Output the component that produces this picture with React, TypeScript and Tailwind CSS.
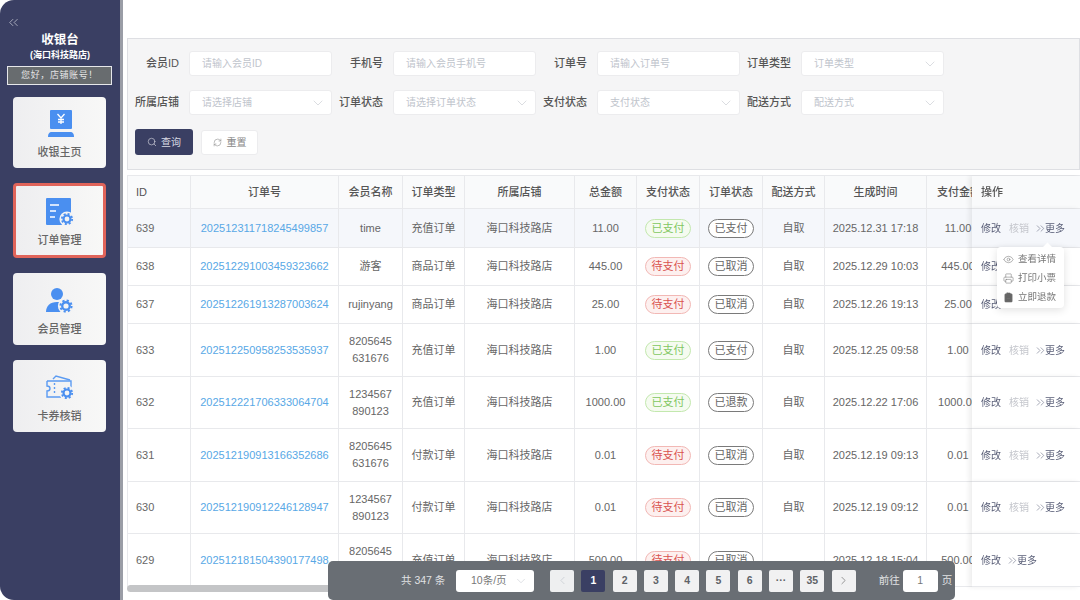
import { ChevronDown, ChevronLeft, ChevronRight, ChevronsLeft, ChevronsRight, ClipboardMinus, Eye, Printer, RefreshCw, Search } from "lucide-react";

type Tone = "paid" | "unpaid" | "plain";

interface OrderRow {
  id: string;
  no: string;
  member: string;
  type: string;
  amount: string;
  pay: string;
  payTone: Tone;
  status: string;
  delivery: string;
  time: string;
  height: string;
  noVerify?: boolean;
  underMenu?: boolean;
}

const rows: OrderRow[] = [
  { id: "639", no: "202512311718245499857", member: "time", type: "充值订单", amount: "11.00", pay: "已支付", payTone: "paid", status: "已支付", delivery: "自取", time: "2025.12.31 17:18", height: "h-[39px] bg-[#f5f7fb]" },
  { id: "638", no: "202512291003459323662", member: "游客", type: "商品订单", amount: "445.00", pay: "待支付", payTone: "unpaid", status: "已取消", delivery: "自取", time: "2025.12.29 10:03", height: "h-[38px] bg-white", underMenu: true },
  { id: "637", no: "202512261913287003624", member: "rujinyang", type: "商品订单", amount: "25.00", pay: "待支付", payTone: "unpaid", status: "已取消", delivery: "自取", time: "2025.12.26 19:13", height: "h-[38px] bg-white", underMenu: true },
  { id: "633", no: "202512250958253535937", member: "8205645631676", type: "充值订单", amount: "1.00", pay: "已支付", payTone: "paid", status: "已支付", delivery: "自取", time: "2025.12.25 09:58", height: "h-[53px] bg-white" },
  { id: "632", no: "202512221706333064704", member: "1234567890123", type: "充值订单", amount: "1000.00", pay: "已支付", payTone: "paid", status: "已退款", delivery: "自取", time: "2025.12.22 17:06", height: "h-[52px] bg-white" },
  { id: "631", no: "202512190913166352686", member: "8205645631676", type: "付款订单", amount: "0.01", pay: "待支付", payTone: "unpaid", status: "已取消", delivery: "自取", time: "2025.12.19 09:13", height: "h-[53px] bg-white" },
  { id: "630", no: "202512190912246128947", member: "1234567890123", type: "付款订单", amount: "0.01", pay: "待支付", payTone: "unpaid", status: "已取消", delivery: "自取", time: "2025.12.19 09:12", height: "h-[52px] bg-white" },
  { id: "629", no: "202512181504390177498", member: "8205645631676", type: "充值订单", amount: "500.00", pay: "待支付", payTone: "unpaid", status: "已取消", delivery: "-", time: "2025.12.18 15:04", height: "h-[53px] bg-white", noVerify: true },
];

const toneClass: Record<Tone, string> = {
  paid: "border-[#c3e8ae] bg-[#f5fbf0] text-[#82c761]",
  unpaid: "border-[#f2b8b5] bg-[#fdf0ef] text-[#d9534f]",
  plain: "border-[#7a7a7a] bg-white text-[#666666]",
};

const Tag = ({ label, tone }: { label: string; tone: Tone }) => (
  <span className={`inline-flex h-[19px] w-[46px] items-center justify-center rounded-full border align-middle text-[11px] ${toneClass[tone]}`}>
    {label}
  </span>
);

const Gear = ({ x, y, r = 6 }: { x: number; y: number; r?: number }) => (
  <g>
    <circle cx={x} cy={y} r={r + 1.6} fill="#f3f3f4" />
    <circle cx={x} cy={y} r={r * 0.86} fill="none" stroke="#4a8ff0" strokeWidth={r * 0.3} strokeDasharray={`${r * 0.34} ${r * 0.335}`} />
    <circle cx={x} cy={y} r={r * 0.58} fill="none" stroke="#4a8ff0" strokeWidth={r * 0.36} />
  </g>
);

const CashierIcon = () => (
  <svg width="28" height="30" viewBox="0 0 28 30">
    <rect x="4" y="1" width="22" height="19" rx="1" fill="#4a8ff0" />
    <path d="M11.5 5l3.5 4 3.500-4M15 9v6M12 10.500h6M12 13h6" fill="none" stroke="#fff" strokeWidth="1.300" />
    <path d="M2 28c0-3 1-5 4-5h18c3 0 4 2 4 5z" fill="#4a8ff0" />
    <rect x="9" y="20" width="12" height="3" fill="#f3f3f4" />
  </svg>
);

const OrderIcon = () => (
  <svg width="30" height="30" viewBox="0 0 30 30">
    <rect x="1" y="1" width="25" height="27" rx="1" fill="#4a8ff0" />
    <path d="M5 8h9M5 14h6M5 20h5" stroke="#fff" strokeWidth="1.400" />
    <Gear x={22} y={22} r={6} />
  </svg>
);

const MemberIcon = () => (
  <svg width="30" height="28" viewBox="0 0 30 28">
    <circle cx="12" cy="7" r="6" fill="#4a8ff0" />
    <path d="M1 25c0-6 4-10 11-10 3 0 5 .6 6.500 2v8z" fill="#4a8ff0" />
    <Gear x={21} y={19} r={6.500} />
  </svg>
);

const TicketIcon = () => (
  <svg width="30" height="28" viewBox="0 0 30 28">
    <path d="M8 5l3-3 14 4" fill="none" stroke="#5b9bf2" strokeWidth="1.400" />
    <path d="M2 7h24v8M2 7v5c2 0 3 1 3 2.500S4 17 2 17v6h14" fill="none" stroke="#5b9bf2" strokeWidth="1.400" />
    <path d="M9.500 9v12" stroke="#5b9bf2" strokeWidth="1.400" strokeDasharray="2 2" />
    <Gear x={22} y={19} r={6} />
  </svg>
);

const navItems = [
  { label: "收银主页", icon: <CashierIcon />, box: "h-[71px] mb-[15px] border-0 pt-[12px]" },
  { label: "订单管理", icon: <OrderIcon />, box: "h-[75px] mb-[15px] border-[3px] border-[#e0645a] pt-[11px]" },
  { label: "会员管理", icon: <MemberIcon />, box: "h-[72px] mb-[15px] border-0 pt-[13px]" },
  { label: "卡券核销", icon: <TicketIcon />, box: "h-[72px] border-0 pt-[13px]" },
];

const Sidebar = () => (
  <aside className="flex h-[600px] w-[123px] shrink-0 flex-col rounded-l-[14px] border-r-[3px] border-[#9a9da6] bg-[#3a3f63] pt-[15px]">
    <ChevronsLeft className="ml-[6px] h-[15px] w-[15px] text-[#d5d6df]" strokeWidth={1.100} />
    <div className="mt-[2px] text-center text-[12.500px] leading-[16px] font-bold text-white">收银台</div>
    <div className="text-center text-[9px] leading-[14px] font-bold text-white">(海口科技路店)</div>
    <div className="mx-[7px] mt-[4px] flex h-[19px] w-[105px] items-center justify-center border-[1.500px] border-[#e6e7ea] bg-[#686c6f] text-[9px] tracking-[0.6px] text-[#e4e4e4]">
      您好，店铺账号！
    </div>
    <div className="mt-[12px] flex flex-col px-[13px]">
      {navItems.map((item) => (
        <div key={item.label} className={`flex w-[93px] flex-col items-center rounded-[4px] bg-gradient-to-r from-[#eeeef0] to-[#f8f8f7] ${item.box}`}>
          <div className="flex h-[30px] items-center">{item.icon}</div>
          <span className="mt-[5px] text-[11px] leading-[16px] font-medium text-[#666666]">{item.label}</span>
        </div>
      ))}
    </div>
  </aside>
);

const filters = [
  { label: "会员ID", hint: "请输入会员ID" },
  { label: "手机号", hint: "请输入会员手机号" },
  { label: "订单号", hint: "请输入订单号" },
  { label: "订单类型", hint: "订单类型", select: true },
  { label: "所属店铺", hint: "请选择店铺", select: true },
  { label: "订单状态", hint: "请选择订单状态", select: true },
  { label: "支付状态", hint: "支付状态", select: true },
  { label: "配送方式", hint: "配送方式", select: true },
];

const FilterPanel = () => (
  <section className="h-[132px] border border-[#dedfe3] bg-[#f5f5f6] pt-[12px] pl-[7px]">
    <div className="grid grid-cols-[197px_197px_197px_197px] gap-x-[7px] gap-y-[14px]">
      {filters.map((f) => (
        <div key={f.label} className="flex items-center">
          <span className="w-[44px] whitespace-nowrap text-right text-[11px] font-medium text-[#555555]">{f.label}</span>
          <div className="ml-[10px] flex h-[25px] w-[143px] items-center justify-between rounded-[3px] border border-[#ececee] bg-white pr-[5px] pl-[12px] text-[10px] text-[#c0c4cc]">
            {f.hint}
            {f.select && <ChevronDown className="h-[16px] w-[16px] text-[#c8ccd2]" strokeWidth={1} />}
          </div>
        </div>
      ))}
    </div>
    <div className="mt-[14px] flex items-center gap-[8px]">
      <button className="flex h-[26px] w-[58px] items-center justify-center gap-[4px] rounded-[3px] bg-[#3a3f63] text-[10px] text-[#d8d9e2]">
        <Search className="h-[10px] w-[10px]" strokeWidth={1.500} />
        查询
      </button>
      <button className="flex h-[25px] w-[57px] items-center justify-center gap-[5px] rounded-[3px] border border-[#ececee] bg-white text-[10px] text-[#888888]">
        <RefreshCw className="h-[9px] w-[9px]" strokeWidth={1.500} />
        重置
      </button>
    </div>
  </section>
);

const headers = [
  { label: "ID", cls: "w-[63px] text-left pl-[8px]" },
  { label: "订单号", cls: "w-[148px] text-center" },
  { label: "会员名称", cls: "w-[64px] text-center" },
  { label: "订单类型", cls: "w-[62px] text-center" },
  { label: "所属店铺", cls: "w-[110px] text-center" },
  { label: "总金额", cls: "w-[62px] text-center" },
  { label: "支付状态", cls: "w-[63px] text-center" },
  { label: "订单状态", cls: "w-[63px] text-center" },
  { label: "配送方式", cls: "w-[62px] text-center" },
  { label: "生成时间", cls: "w-[102px] text-center" },
  { label: "支付金额", cls: "w-[63px] text-left pl-[10px] whitespace-nowrap" },
];

const cellClass = "border-r border-b border-[#e8e9ec] text-center";
const stickyClass = "sticky right-0 z-10 w-[108px] border-b border-[#e8e9ec] pl-[9px] text-left shadow-[-3px_0_5px_rgba(0,0,0,0.07)]";

const OrderTable = () => (
  <div className="relative mt-[5px] h-[417px] overflow-hidden">
    <table className="w-[970px] table-fixed border-separate border-spacing-0 border-t border-l border-[#e8e9ec] text-[11px] text-[#666666]">
      <thead>
        <tr className="h-[33px] bg-[#f9fafb] text-[#555555]">
          {headers.map((h) => (
            <th key={h.label} className={`border-r border-b border-[#e8e9ec] font-medium ${h.cls}`}>{h.label}</th>
          ))}
          <th className={`${stickyClass} bg-[#f9fafb] font-medium`}>操作</th>
        </tr>
      </thead>
      <tbody>
        {rows.map((row) => (
          <tr key={row.id} className={row.height}>
            <td className="border-r border-b border-[#e8e9ec] pl-[8px]">{row.id}</td>
            <td className={`${cellClass} text-[#58a8e6]`}>{row.no}</td>
            <td className={`${cellClass} px-[8px] leading-[17px] break-all`}>{row.member}</td>
            <td className={cellClass}>{row.type}</td>
            <td className={cellClass}>海口科技路店</td>
            <td className={cellClass}>{row.amount}</td>
            <td className={cellClass}><Tag label={row.pay} tone={row.payTone} /></td>
            <td className={cellClass}><Tag label={row.status} tone="plain" /></td>
            <td className={cellClass}>{row.delivery}</td>
            <td className={`${cellClass} whitespace-nowrap`}>{row.time}</td>
            <td className={cellClass}>{row.amount}</td>
            <td className={`${stickyClass} ${row.id === "639" ? "bg-[#f5f7fb]" : "bg-white"}`}>
              <div className="flex items-center text-[10px] text-[#5a5f78]">
                <span>修改</span>
                {!row.noVerify && !row.underMenu && <span className="ml-[8px] text-[#c4c6cc]">核销</span>}
                {!row.underMenu && (
                  <span className="ml-[5px] flex items-center">
                    <ChevronsRight className="-mr-[2px] h-[13px] w-[13px]" strokeWidth={1} />
                    更多
                  </span>
                )}
              </div>
            </td>
          </tr>
        ))}
      </tbody>
    </table>
    <div className="absolute top-[410px] left-0 h-[7px] w-[500px] rounded-full bg-[#c4c5c7]" />
  </div>
);

const menuItems = [
  { label: "查看详情", icon: <Eye className="h-[11px] w-[11px]" strokeWidth={1.200} /> },
  { label: "打印小票", icon: <Printer className="h-[11px] w-[11px]" strokeWidth={1.200} /> },
  { label: "立即退款", icon: <ClipboardMinus className="h-[11px] w-[11px] fill-[#666666]" strokeWidth={1.200} /> },
];

const MoreMenu = () => (
  <div className="absolute top-[247px] left-[997px] z-20 h-[61px] w-[67px] rounded-[4px] bg-white pt-[3px] pl-[6px] text-[9.5px] text-[#777777] shadow-[0_2px_8px_rgba(0,0,0,0.12)]">
    <div className="absolute -top-[3px] left-[47px] h-[7px] w-[7px] rotate-45 bg-white" />
    {menuItems.map((item) => (
      <div key={item.label} className="relative flex h-[19px] items-center gap-[4px]">
        {item.icon}
        {item.label}
      </div>
    ))}
  </div>
);

const pages = ["1", "2", "3", "4", "5", "6", "···", "35"];

const Pagination = () => (
  <div className="absolute top-[561px] left-[328px] z-30 flex h-[39px] w-[627px] items-center rounded-[5px] bg-[#696e74] pl-[73px] text-[10.500px] text-[#e0e1e3]">
    <span className="w-[43px] whitespace-nowrap">共 347 条</span>
    <div className="ml-[12px] flex h-[22px] w-[78px] items-center justify-between rounded-[3px] bg-white pr-[6px] pl-[15px] text-[#777777]">
      10条/页
      <ChevronDown className="h-[14px] w-[14px] text-[#c8ccd2]" strokeWidth={1} />
    </div>
    <div className="ml-[16px] flex items-center gap-[7.300px]">
      <div className="flex h-[22px] w-[24px] items-center justify-center rounded-[2px] bg-[#eeeff0] text-[#c0c4cc]">
        <ChevronLeft className="h-[13px] w-[13px]" strokeWidth={1.200} />
      </div>
      {pages.map((p) => (
        <div
          key={p}
          className={`flex h-[22px] w-[24px] items-center justify-center rounded-[2px] font-bold ${p === "1" ? "bg-[#3a3f63] text-white" : "bg-[#f1f1f2] text-[#5f6368]"}`}
        >
          {p}
        </div>
      ))}
      <div className="flex h-[22px] w-[24px] items-center justify-center rounded-[2px] bg-[#f1f1f2] text-[#666666]">
        <ChevronRight className="h-[13px] w-[13px]" strokeWidth={1.200} />
      </div>
    </div>
    <span className="ml-[23px] whitespace-nowrap">前往</span>
    <div className="ml-[3px] flex h-[22px] w-[35px] items-center justify-center rounded-[3px] bg-white text-[#777777]">1</div>
    <span className="ml-[4px]">页</span>
  </div>
);

const App = () => (
  <div className="relative flex h-[600px] w-[1080px] overflow-hidden bg-white font-['Liberation_Sans','Noto_Sans_CJK_SC',sans-serif]">
    <Sidebar />
    <main className="w-[957px] shrink-0 pt-[38px] pl-[4px]">
      <FilterPanel />
      <OrderTable />
    </main>
    <MoreMenu />
    <Pagination />
  </div>
);

export default App;
